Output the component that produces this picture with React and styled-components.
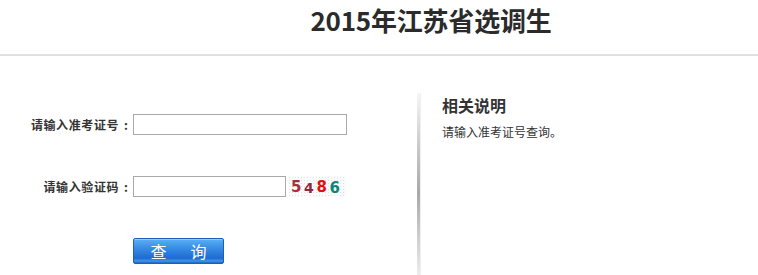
import React from "react";
import styled, { createGlobalStyle } from "styled-components";

const GlobalStyle = createGlobalStyle`
  html, body {
    margin: 0;
    padding: 0;
    background: #fff;
  }
  body {
    font-family: "Noto Sans CJK SC", "Liberation Sans", sans-serif;
    color: #333;
  }
`;

const Header = styled.header`
  height: 54px;
  border-bottom: 2px solid #e0e0e0;
  padding-left: 104px;
  text-align: center;
`;

const Title = styled.h1`
  margin: 0;
  font-size: 26px;
  line-height: 40px;
  font-weight: bold;
  color: #2b2b2b;
  letter-spacing: -0.2px;
`;

const Main = styled.div`
  display: flex;
  height: 219px;
  overflow: hidden;
`;

const LeftCol = styled.div`
  width: 417px;
  padding-top: 58px;
  box-sizing: border-box;
`;

const Form = styled.div`
  display: grid;
  grid-template-columns: 128px auto;
  column-gap: 5px;
  row-gap: 41px;
  align-items: center;
`;

const Label = styled.label`
  justify-self: end;
  font-size: 12px;
  font-weight: bold;
  letter-spacing: 0.6px;
  color: #333;
  line-height: 21px;
  white-space: nowrap;
`;

const Colon = styled.span`
  margin-left: 5px;
  letter-spacing: 0;
`;

const Field = styled.div`
  display: flex;
  align-items: center;
  gap: 2px;
  height: ${p => p.$h || 21}px;
`;

const Input = styled.input`
  width: ${p => p.$w}px;
  height: 21px;
  box-sizing: border-box;
  border: 1px solid #a9a9a9;
  padding: 0 3px;
  margin: 0;
  font-size: 12px;
  outline: none;
`;

const Captcha = styled.div`
  width: 58px;
  height: 21px;
  box-sizing: border-box;
  display: flex;
  align-items: center;
  justify-content: space-between;
  padding: 0 6px 0 3px;
  background-color: #fbfbfb;
  background-image: radial-gradient(#e2e2e2 0.6px, transparent 0.8px);
  background-size: 3px 3px;
  font-family: "DejaVu Sans", sans-serif;
  font-weight: bold;
  font-size: 15px;
`;

const Digit = styled.span`
  color: ${p => p.$c};
  transform: translateY(${p => p.$dy || 0}px);
  font-size: ${p => p.$s || 15}px;
`;

const Button = styled.button`
  width: 91px;
  height: 26px;
  padding: 0;
  border: 1px solid #1f5fb6;
  border-radius: 2px;
  background: linear-gradient(to bottom, #5ab2f2 0%, #3a8fe6 35%, #1f6ad2 80%, #3c9ae8 92%, #1d5fbf 100%);
  box-shadow: inset 0 1px 0 rgba(255, 255, 255, 0.35);
  color: #fff;
  font-family: "Noto Sans CJK SC", sans-serif;
  font-size: 16px;
  line-height: 22px;
  display: flex;
  align-items: center;
  justify-content: center;
  gap: 24px;
  cursor: pointer;
`;

const Divider = styled.div`
  width: 3px;
  margin-top: 37px;
  flex-shrink: 0;
  background: linear-gradient(to bottom, #f7f7f7 0%, #d0d0d0 25%, #a8a8a8 55%, #cfcfcf 80%, #ececec 100%);
  box-shadow: 1px 0 1px #eee;
`;

const RightCol = styled.div`
  padding: 39px 0 0 22px;
`;

const SideTitle = styled.h3`
  margin: 0;
  font-size: 16px;
  line-height: 20px;
  font-weight: bold;
  color: #333;
`;

const SideText = styled.p`
  margin: 9px 0 0;
  font-size: 12px;
  line-height: 16px;
  color: #333;
`;

export default function App() {
  return (
    <>
      <GlobalStyle />
      <Header>
        <Title>2015年江苏省选调生</Title>
      </Header>
      <Main>
        <LeftCol>
          <Form>
            <Label htmlFor="zkz">请输入准考证号<Colon>:</Colon></Label>
            <Field>
              <Input id="zkz" type="text" $w={214} />
            </Field>

            <Label htmlFor="yzm">请输入验证码<Colon>:</Colon></Label>
            <Field>
              <Input id="yzm" type="text" $w={153} />
              <Captcha>
                <Digit $c="#a5303a">5</Digit>
                <Digit $c="#8a2a3a" $dy={1} $s={14}>4</Digit>
                <Digit $c="#e01010">8</Digit>
                <Digit $c="#10857a" $dy={1}>6</Digit>
              </Captcha>
            </Field>

            <span />
            <Field $h={26}>
              <Button type="button">
                <span>查</span>
                <span>询</span>
              </Button>
            </Field>
          </Form>
        </LeftCol>
        <Divider />
        <RightCol>
          <SideTitle>相关说明</SideTitle>
          <SideText>请输入准考证号查询。</SideText>
        </RightCol>
      </Main>
    </>
  );
}
